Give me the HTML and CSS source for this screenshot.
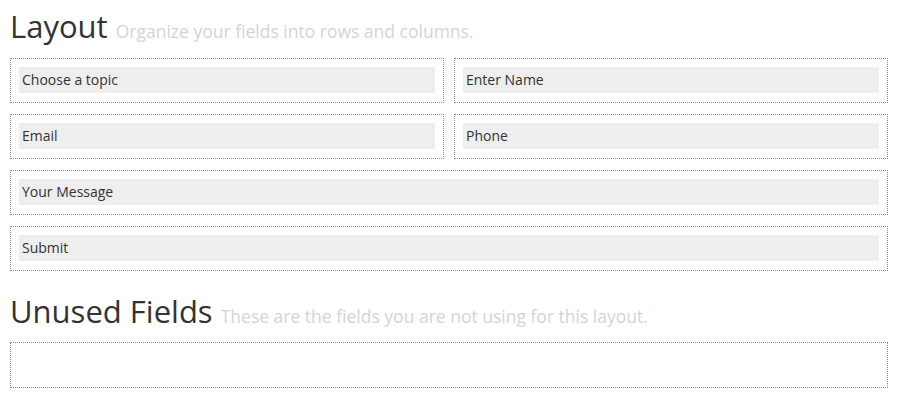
FILE: index.html
```html
<!DOCTYPE html>
<html lang="en">
<head>
  <meta charset="UTF-8">
  <meta name="viewport" content="width=device-width, initial-scale=1.0">
  <title>Form Layout</title>
  <link rel="stylesheet" href="styles.css">
</head>
<body>

  <!-- Fields placed in the layout -->
  <div class="section">
    <h2 class="section-title">Layout <small>Organize your fields into rows and columns.</small></h2>

    <div class="layout-row">
      <div class="layout-col"><div class="field">Choose a topic</div></div>
      <div class="layout-col"><div class="field">Enter Name</div></div>
    </div>
    <div class="layout-row">
      <div class="layout-col"><div class="field">Email</div></div>
      <div class="layout-col"><div class="field">Phone</div></div>
    </div>
    <div class="layout-row">
      <div class="layout-col"><div class="field">Your Message</div></div>
    </div>
    <div class="layout-row">
      <div class="layout-col"><div class="field">Submit</div></div>
    </div>
  </div>

  <!-- Fields not in the layout -->
  <div class="section unused">
    <h2 class="section-title">Unused Fields <small>These are the fields you are not using for this layout.</small></h2>
    <div class="layout-col empty"></div>
  </div>

</body>
</html>
```

FILE: styles.css
```css
body {
  margin: 0;
  padding: 10px 13px 10px 10px;
  font-family: "Open Sans", "Liberation Sans", sans-serif;
  color: #333;
  background: #fff;
}

.section-title {
  margin: 0 0 15px;
  font-size: 31px;
  font-weight: normal;
  line-height: 33px;
  color: #333;
}

.section-title small {
  font-size: 17.5px;
  line-height: 1;
  color: #d4d4d4;
}

.unused .section-title {
  margin-top: 24px;
  margin-bottom: 14px;
}

.layout-row {
  display: flex;
  gap: 10px;
  margin-bottom: 11px;
}

.layout-col {
  flex: 1;
  border: 1px dotted #888;
  padding: 8px 8px 9px;
}

.field {
  background-color: #eee;
  height: 26px;
  line-height: 26px;
  padding-left: 3px;
  font-size: 14px;
  color: #333;
}

.layout-col.empty {
  height: 27px;
}
```
